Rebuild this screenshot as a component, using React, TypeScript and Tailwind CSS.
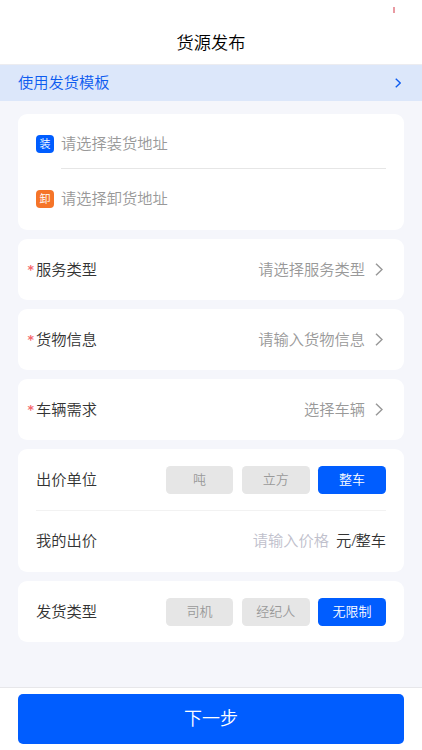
import clsx from "clsx";

export default function App() {
  return (
    <div className="flex h-[750px] w-[422px] flex-col bg-[#f5f6fb] font-['Liberation_Sans','Noto_Sans_CJK_SC',sans-serif] text-[15.25px] font-[350] text-[#333]">
      <header className="relative flex h-[65px] shrink-0 items-end justify-center border-b border-[#ececf0] bg-white pb-[9px]">
        <span className="absolute top-[7px] left-[393px] h-[6px] w-[2px] bg-[#e99aa2]" />
        <h1 className="text-[17.2px] leading-6 font-[350] text-black">货源发布</h1>
      </header>

      <div className="flex h-9 shrink-0 items-center justify-between bg-[#dce7fa] pr-[21px] pl-[18px] text-[#0d5cf0]">
        <span className="pt-px">使用发货模板</span>
        <Chevron className="h-[10px] w-[6px]" strokeWidth={1.8} />
      </div>

      <main className="flex flex-1 flex-col gap-[9px] px-[18px] pt-[13px]">
        {/* 装卸货地址 */}
        <section className="h-[116px] rounded-[9px] bg-white px-[18px]">
          <AddressRow tag="装" color="bg-[#005dff]" text="请选择装货地址" border />
          <AddressRow tag="卸" color="bg-[#f57428]" text="请选择卸货地址" />
        </section>

        <SelectRow label="服务类型" placeholder="请选择服务类型" />
        <SelectRow label="货物信息" placeholder="请输入货物信息" />
        <SelectRow label="车辆需求" placeholder="选择车辆" />

        {/* 出价 */}
        <section className="h-[123px] rounded-[9px] bg-white px-[18px]">
          <OptionRow label="出价单位" options={["吨", "立方", "整车"]} active={2} />
          <div className="flex h-[62px] items-center border-t border-[#f2f2f2]">
            <span className="flex-1">我的出价</span>
            <span className="mr-[7px] text-[#c0c0cc]">请输入价格</span>
            <span>
              元<span className="-mr-px font-['Noto_Sans',sans-serif] font-light leading-none">/</span>整车
            </span>
          </div>
        </section>

        <section className="h-[61px] rounded-[9px] bg-white px-[18px]">
          <OptionRow label="发货类型" options={["司机", "经纪人", "无限制"]} active={2} />
        </section>
      </main>

      <footer className="h-[63px] shrink-0 border-t border-[#e7e7ea] bg-white px-[18px] pt-[6px]">
        <button className="h-[50px] w-full rounded-[5px] bg-[#005dff] text-[18px] text-white">下一步</button>
      </footer>
    </div>
  );
}

const AddressRow = ({ tag, color, text, border }: { tag: string; color: string; text: string; border?: boolean }) => (
  <div className="flex h-[55px] items-center gap-[7px]">
    <span
      className={clsx(
        "mt-[5px] flex size-[18px] items-center justify-center rounded-[4px] text-[11px] leading-none text-white",
        color,
      )}
    >
      {tag}
    </span>
    <span
      className={clsx(
        "flex h-full flex-1 items-center text-[#999]",
        border ? "border-b border-[#e6e6e6] pt-[7px]" : "pt-[5px]",
      )}
    >
      {text}
    </span>
  </div>
);

const SelectRow = ({ label, placeholder }: { label: string; placeholder: string }) => (
  <section className="flex h-[61px] shrink-0 items-center rounded-[9px] bg-white pr-[21px] pl-[9.5px]">
    <span className="w-[8.5px] pt-[2px] font-['DejaVu_Sans',sans-serif] text-[12.5px] leading-none font-bold text-[#f5686c]">
      *
    </span>
    <span className="flex-1 pt-px">{label}</span>
    <span className="mr-[10px] pt-px text-[#999]">{placeholder}</span>
    <Chevron className="h-[13px] w-2 text-[#999]" />
  </section>
);

const OptionRow = ({ label, options, active }: { label: string; options: string[]; active: number }) => (
  <div className="flex h-[61px] items-center justify-between">
    <span className="pt-px">{label}</span>
    <div className="flex gap-[8.5px]">
      {options.map((option, i) => (
        <button
          key={option}
          className={clsx(
            "h-7 w-[67.8px] rounded-[4.5px] pt-px text-[13px]",
            i === active ? "bg-[#005dff] text-white" : "bg-[#e6e6e6] text-[#999]",
          )}
        >
          {option}
        </button>
      ))}
    </div>
  </div>
);

const Chevron = ({ className, strokeWidth = 1.5 }: { className: string; strokeWidth?: number }) => (
  <svg viewBox="0 0 8 13" fill="none" className={className}>
    <path d="M1 0.7L7 6.5L1 12.3" stroke="currentColor" strokeWidth={strokeWidth} />
  </svg>
);
